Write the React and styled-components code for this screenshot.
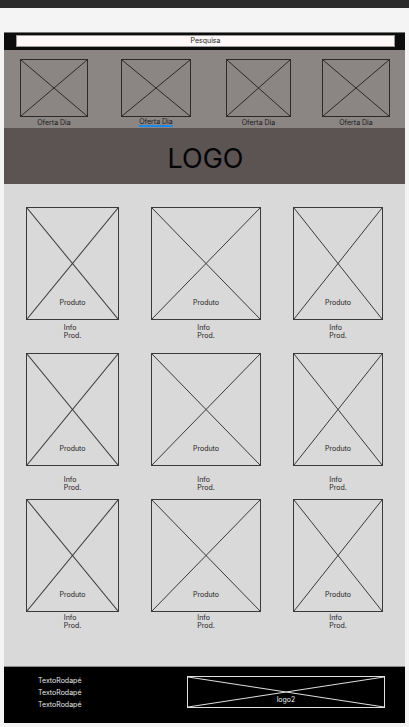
import React from 'react'
import styled, { createGlobalStyle } from 'styled-components'

const GlobalStyle = createGlobalStyle`
  html, body { margin: 0; padding: 0; }
  body {
    background: #f4f4f4;
    font-family: Inter, "Noto Sans", sans-serif;
    color: #111;
  }
`

const TopBar = styled.div`
  height: 8px;
  background: #2b2b2b;
`

const Frame = styled.div`
  margin: 24px 4px 4px;
  display: flex;
  flex-direction: column;
`

const SearchBand = styled.div`
  height: 18px;
  background: #0d0d0d;
  border-top: 1px solid #777;
  box-sizing: border-box;
  padding: 2px 10px 0 12px;
`

const SearchInput = styled.div`
  height: 12px;
  background: #fff8f8;
  border: 1px solid #9a9a9a;
  box-sizing: border-box;
  font-size: 7px;
  line-height: 10px;
  text-align: center;
  color: #222;
`

const OfferStrip = styled.div`
  height: 78px;
  background: #8b8584;
  box-sizing: border-box;
  padding: 9px 0 0 16px;
  display: flex;
  align-items: flex-start;
`

const Offer = styled.div`
  width: ${p => p.w}px;
  margin-right: ${p => p.gap || 0}px;
  display: flex;
  flex-direction: column;
  align-items: center;
`

const OfferLabel = styled.span`
  font-size: 7px;
  margin-top: 1px;
  color: #1a1a1a;
  border-bottom: ${p => (p.active ? '2px solid #1e88e5' : 'none')};
  line-height: ${p => (p.active ? '7px' : '9px')};
`

const LogoBand = styled.div`
  height: 56px;
  background: #5c5353;
  box-sizing: border-box;
  padding: 4px 0 0 2px;
  display: flex;
  align-items: center;
  justify-content: center;
  font-size: 27px;
  font-weight: 400;
  color: #050505;
`

const Products = styled.div`
  height: 482px;
  background: #d9d9d9;
  box-sizing: border-box;
  padding: 23px 0 0 22px;
  display: grid;
  grid-template-columns: 93px 110px 90px;
  grid-auto-rows: 146px;
  column-gap: 32px;
  align-content: start;
`

const Cell = styled.div`
  display: flex;
  flex-direction: column;
  align-items: center;
`

const Placeholder = styled.div`
  position: relative;
  width: 100%;
  height: ${p => p.h}px;
  border: 1px solid ${p => p.line};
  box-sizing: border-box;
  display: flex;
  align-items: flex-end;
  justify-content: center;
`

const Cross = styled.svg`
  position: absolute;
  inset: 0;
  width: 100%;
  height: 100%;
`

const BoxText = styled.span`
  position: relative;
  font-size: 7px;
  color: ${p => p.color || '#222'};
  margin-bottom: ${p => p.bottom}px;
`

const Info = styled.div`
  margin-top: ${p => p.top}px;
  font-size: 7px;
  line-height: 8px;
  color: #222;
  text-align: left;
`

const Footer = styled.div`
  height: 57px;
  background: #000;
  border-top: 1px solid #888;
  box-sizing: border-box;
  padding: 8px 20px 0 34px;
  display: flex;
  justify-content: space-between;
  align-items: flex-start;
`

const FooterLinks = styled.div`
  display: flex;
  flex-direction: column;
  font-size: 7px;
  line-height: 12px;
  color: #e6e6e6;
`

const FooterLogo = styled.div`
  width: 198px;
  margin-top: 1px;
`

function Box({ h, line = '#333', label, labelColor, bottom = 0 }) {
  return (
    <Placeholder h={h} line={line}>
      <Cross viewBox="0 0 100 100" preserveAspectRatio="none">
        <line x1="0" y1="0" x2="100" y2="100" stroke={line} strokeWidth="1" vectorEffect="non-scaling-stroke" />
        <line x1="100" y1="0" x2="0" y2="100" stroke={line} strokeWidth="1" vectorEffect="non-scaling-stroke" />
      </Cross>
      {label && <BoxText color={labelColor} bottom={bottom}>{label}</BoxText>}
    </Placeholder>
  )
}

const offers = [
  { w: 68, gap: 33 },
  { w: 70, gap: 35, active: true },
  { w: 65, gap: 31 },
  { w: 68, gap: 0 },
]

const infoTop = [4, 10, 2]

export default function App() {
  return (
    <>
      <GlobalStyle />
      <TopBar />
      <Frame>
        <SearchBand>
          <SearchInput>Pesquisa</SearchInput>
        </SearchBand>
        <OfferStrip>
          {offers.map((o, i) => (
            <Offer key={i} w={o.w} gap={o.gap}>
              <Box h={58} line="#2a2a2a" />
              <OfferLabel active={o.active}>Oferta Dia</OfferLabel>
            </Offer>
          ))}
        </OfferStrip>
        <LogoBand>LOGO</LogoBand>
        <Products>
          {[0, 1, 2].map(row =>
            [0, 1, 2].map(col => (
              <Cell key={row + '-' + col}>
                <Box h={113} line="#3a3a3a" label="Produto" bottom={12} />
                <Info top={infoTop[row]}>
                  Info
                  <br />
                  Prod.
                </Info>
              </Cell>
            ))
          )}
        </Products>
        <Footer>
          <FooterLinks>
            <span>TextoRodapé</span>
            <span>TextoRodapé</span>
            <span>TextoRodapé</span>
          </FooterLinks>
          <FooterLogo>
            <Box h={32} line="#e0e0e0" label="logo2" labelColor="#eee" bottom={3} />
          </FooterLogo>
        </Footer>
      </Frame>
    </>
  )
}
